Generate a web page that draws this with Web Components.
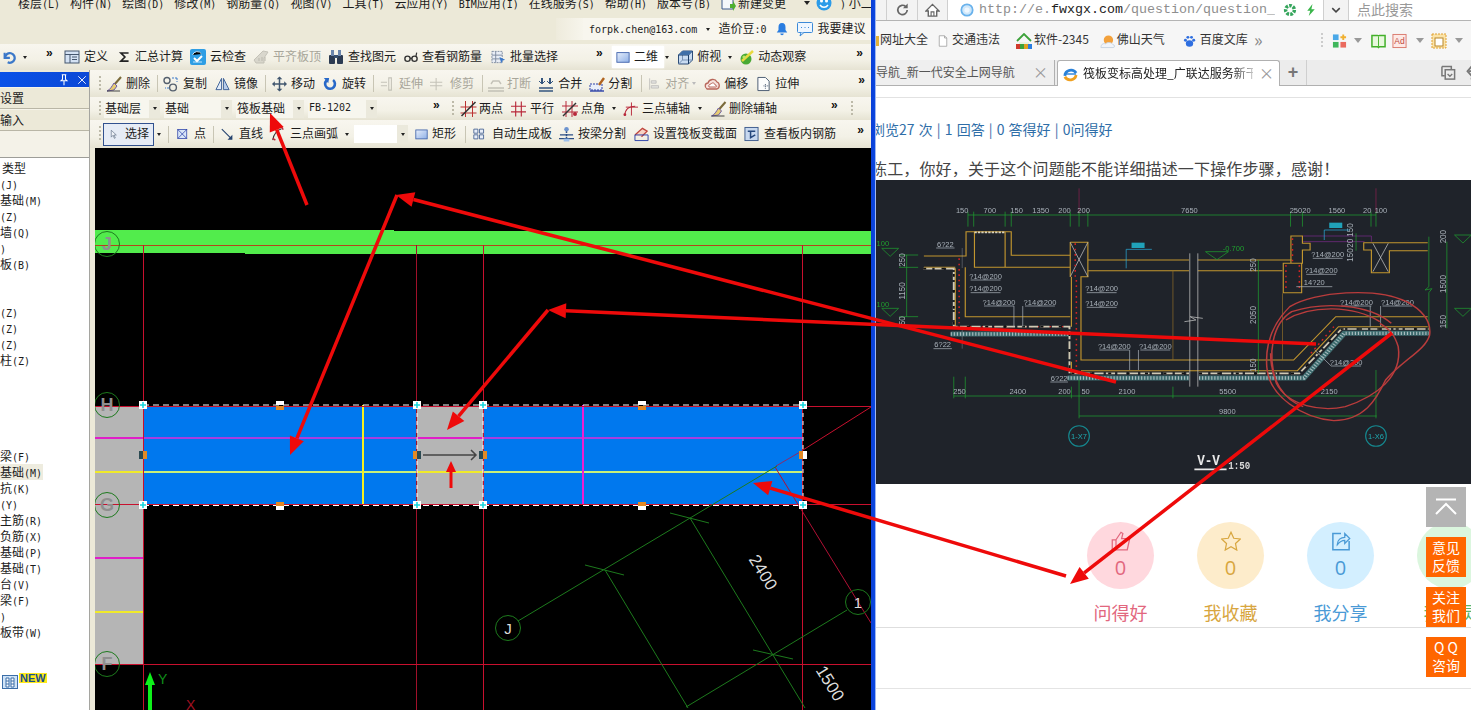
<!DOCTYPE html>
<html lang="zh">
<head>
<meta charset="utf-8">
<title>GCL</title>
<style>
html, body { margin: 0; height: 100%; overflow: hidden; background: #fff; }
body { font-family: "Noto Sans CJK SC", "Liberation Sans", sans-serif; }
</style>
</head>
<body>
<app-root>
  <cad-window slot="left">
    <cad-menubar></cad-menubar>
    <cad-userbar></cad-userbar>
    <tool-bar style="height:26px">
      <tool-btn icon="undo" w="14" g="0" style="margin-left:2px"></tool-btn><tb-caret style="margin-left:7px"></tb-caret><tb-more style="margin-left:19px"></tb-more>
      <tool-btn icon="define" style="margin-left:10px">定义</tool-btn>
      <tool-btn icon="sum" w="13" style="margin-left:10px">汇总计算</tool-btn>
      <tool-btn icon="cloud" style="margin-left:7px">云检查</tool-btn>
      <tool-btn icon="flat" off style="margin-left:7px">平齐板顶</tool-btn>
      <tool-btn icon="binoc" style="margin-left:7px">查找图元</tool-btn>
      <tool-btn icon="glasses" w="14" style="margin-left:8px">查看钢筋量</tool-btn>
      <tool-btn icon="batch" w="15" style="margin-left:9px">批量选择</tool-btn>
      <tb-more style="margin-left:38px"></tb-more>
      <tool-btn icon="plane" w="14" flat style="margin-left:8px">二维</tool-btn><tb-caret style="margin-left:1px"></tb-caret>
      <tool-btn icon="cube" w="17" g="3" style="margin-left:8px">俯视</tool-btn><tb-caret style="margin-left:7px"></tb-caret>
      <tool-btn icon="orbit" g="3" style="margin-left:7px">动态观察</tool-btn>
      <tb-more style="margin-left:50px"></tb-more>
    </tool-bar>
    <cad-body>
      <side-panel slot="side">
        <side-row label="类型" lead></side-row>
        <side-row label="(J)"></side-row>
        <side-row label="基础(M)"></side-row>
        <side-row label="(Z)"></side-row>
        <side-row label="墙(Q)"></side-row>
        <side-row label=")"></side-row>
        <side-row label="板(B)"></side-row>
        <side-row></side-row>
        <side-row></side-row>
        <side-row label="(Z)"></side-row>
        <side-row label="(Z)"></side-row>
        <side-row label="(Z)"></side-row>
        <side-row label="柱(Z)"></side-row>
        <side-row></side-row>
        <side-row></side-row>
        <side-row></side-row>
        <side-row></side-row>
        <side-row></side-row>
        <side-row label="梁(F)"></side-row>
        <side-row label="基础(M)" active></side-row>
        <side-row label="抗(K)"></side-row>
        <side-row label="(Y)"></side-row>
        <side-row label="主筋(R)"></side-row>
        <side-row label="负筋(X)"></side-row>
        <side-row label="基础(P)"></side-row>
        <side-row label="基础(T)"></side-row>
        <side-row label="台(V)"></side-row>
        <side-row label="梁(F)"></side-row>
        <side-row label=")"></side-row>
        <side-row label="板带(W)"></side-row>
      </side-panel>
      <tool-bar style="height:27px">
        <tb-grip style="margin-left:9px"></tb-grip>
        <tool-btn icon="brush" style="margin-left:4px">删除</tool-btn>
        <tb-sep style="margin-left:7px"></tb-sep>
        <tool-btn icon="copy" style="margin-left:5px">复制</tool-btn>
        <tool-btn icon="mirror" w="15" style="margin-left:8px">镜像</tool-btn>
        <tb-sep style="margin-left:7px"></tb-sep>
        <tool-btn icon="move" w="15" style="margin-left:6px">移动</tool-btn>
        <tool-btn icon="rotate" w="14" g="5" style="margin-left:8px">旋转</tool-btn>
        <tb-sep style="margin-left:7px"></tb-sep>
        <tool-btn icon="extend" w="14" g="5" off style="margin-left:6px">延伸</tool-btn>
        <tool-btn icon="trim" w="14" g="6" off style="margin-left:7px">修剪</tool-btn>
        <tb-sep style="margin-left:8px"></tb-sep>
        <tool-btn icon="breakline" g="3" off style="margin-left:5px">打断</tool-btn>
        <tool-btn icon="merge" style="margin-left:7px">合并</tool-btn>
        <tool-btn icon="split" g="3" style="margin-left:7px">分割</tool-btn>
        <tb-sep style="margin-left:9px"></tb-sep>
        <tool-btn icon="align" w="13" off style="margin-left:6px">对齐</tool-btn><tb-caret off style="margin-left:3px"></tb-caret>
        <tool-btn icon="offset" style="margin-left:8px">偏移</tool-btn>
        <tool-btn icon="stretch" w="15" style="margin-left:8px">拉伸</tool-btn>
        <tb-more style="margin-left:59px"></tb-more>
      </tool-bar>
      <tool-bar style="height:23px">
        <tb-grip style="margin-left:9px"></tb-grip>
        <tb-select w="56" style="margin-left:2px">基础层</tb-select>
        <tb-select w="68" style="margin-left:4px">基础</tb-select>
        <tb-select w="68" style="margin-left:4px">筏板基础</tb-select>
        <tb-select w="69" mono style="margin-left:4px">FB-1202</tb-select>
        <tb-more style="margin-left:56px"></tb-more>
        <tb-grip style="margin-left:11px"></tb-grip>
        <tool-btn icon="twopt" w="17" g="2" style="margin-left:5px">两点</tool-btn>
        <tool-btn icon="para" w="15" style="margin-left:8px">平行</tool-btn>
        <tool-btn icon="angle" g="3" style="margin-left:8px">点角</tool-btn><tb-caret style="margin-left:7px"></tb-caret>
        <tool-btn icon="three" w="15" style="margin-left:7px">三点辅轴</tool-btn><tb-caret style="margin-left:8px"></tb-caret>
        <tool-btn icon="brush" w="17" g="2" style="margin-left:8px">删除辅轴</tool-btn>
        <tb-more style="margin-left:54px"></tb-more>
        <tb-grip style="margin-left:12px"></tb-grip>
      </tool-bar>
      <tool-bar style="height:28px">
        <tb-grip style="margin-left:9px"></tb-grip>
        <tool-btn icon="cursor" w="10" g="5" pressed style="margin-left:1px">选择</tool-btn><tb-caret style="margin-left:3px"></tb-caret>
        <tb-sep style="margin-left:7px"></tb-sep>
        <tool-btn icon="point" w="12" g="5" style="margin-left:8px">点</tool-btn>
        <tb-sep style="margin-left:7px"></tb-sep>
        <tool-btn icon="line" w="13" g="5" style="margin-left:7px">直线</tool-btn>
        <tool-btn icon="arc" w="14" g="5" style="margin-left:8px">三点画弧</tool-btn><tb-caret style="margin-left:7px"></tb-caret>
        <tb-select w="54" white style="margin-left:5px"></tb-select>
        <tool-btn icon="plane" w="13" style="margin-left:7px">矩形</tool-btn>
        <tb-sep style="margin-left:9px"></tb-sep>
        <tool-btn icon="auto" w="13" g="6" style="margin-left:7px">自动生成板</tool-btn>
        <tool-btn icon="beam" w="15" style="margin-left:7px">按梁分割</tool-btn>
        <tool-btn icon="section" w="15" style="margin-left:8px">设置筏板变截面</tool-btn>
        <tool-btn icon="rebar" w="15" g="5" style="margin-left:7px">查看板内钢筋</tool-btn>
        <tb-more style="margin-left:21px"></tb-more>
      </tool-bar>
      <cad-canvas></cad-canvas>
    </cad-body>
  </cad-window>
  <browser-window slot="right">
    <browser-nav></browser-nav>
    <fav-bar></fav-bar>
    <tab-strip></tab-strip>
    <qa-page>
      <cad-photo slot="photo"></cad-photo>
      <qa-stat slot="stats" color="#e2677e" bg="#ffd8de" icon="thumb" label="问得好"></qa-stat>
      <qa-stat slot="stats" color="#d8a63f" bg="#fdeccb" icon="star" label="我收藏"></qa-stat>
      <qa-stat slot="stats" color="#4a9ad6" bg="#d3efff" icon="share" label="我分享"></qa-stat>
      <qa-stat slot="stats" color="#58b56e" bg="#dbf6de" icon="" label="我要灵"></qa-stat>
    </qa-page>
  </browser-window>
  <float-stack slot="over">
    <float-btn gray></float-btn>
    <float-btn>意见<br>反馈</float-btn>
    <float-btn>关注<br>我们</float-btn>
    <float-btn>Q Q<br>咨询</float-btn>
  </float-stack>
  <arrow-layer slot="over"></arrow-layer>
</app-root>

<script>
"use strict";

const CJK = '"Noto Sans CJK SC", "Liberation Sans", sans-serif';

const ICONS = {
  undo: '<path d="M3 3v6h6" fill="none" stroke="#3b78c9" stroke-width="2.4"/><path d="M3.5 8.5a5.5 5.5 0 1 1 3 5.5" fill="none" stroke="#3b78c9" stroke-width="2.6"/>',
  define: '<rect x="1" y="2" width="14" height="12" fill="#d4e2f4" stroke="#44566e"/><path d="M1 5.5h14M6 5.5v8.5M8 8h5M8 10.5h5" stroke="#44566e"/>',
  sum: '<path d="M13 3H3.5L8.5 8l-5 5H13" fill="none" stroke="#222" stroke-width="2"/>',
  cloud: '<rect x="0" y="0" width="16" height="16" rx="2" fill="#2f9ee4"/><path d="M2.5 6a5 5 0 0 1 9-1M3 13h9" stroke="#bfe3fb"/><path d="M4 9l3 3 5-5" fill="none" stroke="#fff" stroke-width="2"/>',
  flat: '<path d="M1 11l9-9 5 1-4 6v5H3z" fill="#d0cec4" stroke="#b4b2a8"/><path d="M6 12v-3M9 12V8M12 12V8" stroke="#a8a69c"/>',
  binoc: '<rect x="1" y="6" width="6" height="9" rx="1" fill="#2c3b52"/><rect x="9" y="6" width="6" height="9" rx="1" fill="#2c3b52"/><rect x="3" y="1" width="3" height="6" fill="#6b86ad"/><rect x="10" y="1" width="3" height="6" fill="#6b86ad"/><rect x="6" y="6" width="4" height="3" fill="#38506f"/>',
  glasses: '<circle cx="4" cy="10" r="3" fill="none" stroke="#333" stroke-width="1.6"/><circle cx="12" cy="10" r="3" fill="none" stroke="#333" stroke-width="1.6"/><path d="M7 9.5h2M13.5 8l1-5" stroke="#333" stroke-width="1.4"/>',
  batch: '<path d="M1 2h11v12H1z" fill="#e8edf5" stroke="#7d8ba0" stroke-dasharray="2 1"/><path d="M1 6h11M1 10h11M5 2v12" stroke="#7d8ba0"/><path d="M9 8l6 3-3 1-1 3z" fill="#3b78c9"/>',
  plane: '<defs><linearGradient id="pg" x1="0" y1="0" x2="1" y2="1"><stop offset="0" stop-color="#e6eefb"/><stop offset="1" stop-color="#8fb0e6"/></linearGradient></defs><rect x="1" y="3" width="14" height="11" fill="url(#pg)" stroke="#3a5ea8"/>',
  cube: '<path d="M1 6l4-4h10v9l-4 4H1z" fill="#c9dcf2" stroke="#2d4d78"/><path d="M5 2v9h10M5 11l-4 4" stroke="#7a93b5" fill="none"/><path d="M1 6h10v9M11 6l4-4" stroke="#1c3d66" fill="none"/><path d="M1 6l4-4h10l-4 4z" fill="#3f6fa8"/>',
  orbit: '<circle cx="7" cy="10" r="5.5" fill="#49a934"/><path d="M3 12L14 2" stroke="#e9d93f" stroke-width="2.4"/><circle cx="5" cy="8" r="1.6" fill="#b9e86a"/>',
  brush: '<path d="M15 1L8 9" stroke="#7a6a3a" stroke-width="2"/><path d="M8 7l3 3-3 4-7 1c3-1 5-5 7-8z" fill="#e8cd72" stroke="#6a5aa8"/><path d="M1 15h13" stroke="#444"/>',
  copy: '<circle cx="4" cy="4.5" r="3" fill="none" stroke="#55606e" stroke-width="1.4"/><circle cx="10" cy="11.5" r="3.4" fill="none" stroke="#55606e" stroke-width="1.4"/><path d="M9 2l5 0M14 2v4M6 12H2" stroke="#3b78c9" stroke-dasharray="2 1"/>',
  mirror: '<path d="M7 2L1 14h6z" fill="#e2ecf8" stroke="#3b5f95"/><path d="M9 2l6 12H9z" fill="#b8cdea" stroke="#3b5f95"/>',
  move: '<path d="M8 1v14M1 8h14" stroke="#42576f" stroke-width="1.6"/><path d="M8 0l3 3H5zM8 16l3-3H5zM0 8l3-3v6zM16 8l-3-3v6z" fill="#42576f"/>',
  rotate: '<path d="M11.5 3.5A5.6 5.6 0 1 1 4 4" fill="none" stroke="#2768c8" stroke-width="3"/><path d="M1 1l6 0-1 6z" fill="#2768c8"/>',
  extend: '<path d="M1 6h7M1 10h7M10 1h3v14h-3z" fill="none" stroke="#b4b2a8" stroke-width="1.2"/>',
  trim: '<path d="M0 6h14M0 10h14M7 1v14" fill="none" stroke="#b4b2a8" stroke-width="1.2"/>',
  breakline: '<path d="M0 12h16M0 15h16M3 8l2-3h6l2 3" fill="none" stroke="#b4b2a8" stroke-width="1.4"/>',
  merge: '<path d="M1 12h14M1 15h14" stroke="#35567f" stroke-width="1.4"/><path d="M4 2v6M12 2v6" stroke="#35567f" stroke-width="2"/><path d="M1 5l3 3 3-3M9 5l3 3 3-3" fill="none" stroke="#35567f"/>',
  split: '<path d="M1 8h12v6H1z" fill="#e8eef9" stroke="#2a3fa8" stroke-dasharray="2 1"/><path d="M10 9l5-7" stroke="#b0631f" stroke-width="2.4"/><path d="M1 15h14" stroke="#2a3fa8" stroke-width="1.4"/>',
  align: '<path d="M2 1v14M4 4h6v3H4zM4 10h9v3H4z" fill="#ddd" stroke="#aaa"/>',
  offset: '<path d="M3 13c-3-2-2-6 1-6 1-4 7-5 9-1 3 1 3 6 0 7z" fill="#f6e1dc" stroke="#b8665a" stroke-width="1.3"/><path d="M5 11c-1-2 1-3 2-3 1-2 4-1 4 1 2 0 2 2 1 2z" fill="#fff" stroke="#b8665a"/>',
  stretch: '<path d="M2 1h8l4 4v10H2z" fill="#fdfdfd" stroke="#44566e"/><path d="M10 8v5M8 10h5" stroke="#44566e" stroke-dasharray="1 1"/>',
  twopt: '<path d="M5 0v16M12 0v16M0 6h16M0 12h16" stroke="#b33" /><path d="M1 15L15 1" stroke="#333" stroke-width="1.6"/>',
  para: '<path d="M0 5h16M0 11h16M5 0v16M11 0v16" stroke="#b8283a" stroke-width="1.2"/>',
  angle: '<path d="M4 0v16M10 0v16M0 5h16M0 11h16" stroke="#b8283a"/><path d="M1 15L14 2" stroke="#333" stroke-width="1.4"/><circle cx="13" cy="13" r="2" fill="#b8283a"/>',
  three: '<path d="M2 15c0-6 4-10 11-10" fill="none" stroke="#b8283a" stroke-width="1.2"/><path d="M9 1v14M3 6h13" stroke="#b8283a"/><circle cx="2" cy="14" r="1.5" fill="#b8283a"/>',
  cursor: '<path d="M2 2v11l3-3 2 5 1.5-.6-2-4.8h3.6z" fill="#eef2f7" stroke="#5a6a80"/>',
  point: '<rect x="1" y="2" width="12" height="12" fill="#d9e6f8" stroke="#2a3fa8"/><path d="M1 2l12 12M13 2L1 14" stroke="#2a3fa8"/>',
  line: '<path d="M1 2l12 12" stroke="#24426e" stroke-width="1.4"/><path d="M14 15H8l6-6z" fill="#24426e"/>',
  arc: '<path d="M2 15C3 8 6 4 12 2" fill="none" stroke="#333" stroke-width="1.2"/><path d="M2 13l3 2M12 0l2 3" stroke="#b8283a" stroke-width="1.6"/>',
  auto: '<path d="M1 2h5v5H1zM8 2h5v5H8zM1 9h5v5H1zM8 9h5v5H8z" fill="#e8eef9" stroke="#3c5a8c"/>',
  beam: '<circle cx="8" cy="3" r="2.4" fill="#6d94cf"/><path d="M8 5v10" stroke="#2d4f86" stroke-dasharray="2 1" stroke-width="1.6"/><path d="M1 9h14M0 13h16" stroke="#2d4f86" stroke-width="1.4"/><rect x="5" y="13" width="6" height="3" fill="#9ec0ec"/>',
  section: '<path d="M1 9l8-7 5 3-6 6" fill="#f7d2c4" stroke="#c0453c" stroke-width="1.4"/><path d="M1 9h14v6H1z" fill="none" stroke="#2a3fa8"/>',
  rebar: '<rect x="1" y="1" width="14" height="14" fill="#c7d8ef" stroke="#3c5a8c"/><path d="M4 5h8M7 5v7l5-3" fill="none" stroke="#27497e" stroke-width="1.6"/>',
  doc: '<path d="M2 0h8l3 3v11H2z" fill="#f4f7fb" stroke="#3c5a8c"/><path d="M10 9h3v-3l3 5-3 5v-3h-3z" fill="#4caf31"/>',
  face: '<circle cx="8" cy="8" r="7.5" fill="#2b9be8"/><circle cx="5.5" cy="6" r="1.5" fill="#fff"/><circle cx="10.5" cy="6" r="1.5" fill="#fff"/><path d="M4 10c2 3 6 3 8 0" fill="none" stroke="#fff" stroke-width="1.4"/>',
  bell: '<path d="M8 1c3 0 4 2 4 5v3l2 3H2l2-3V6c0-3 1-5 4-5z" fill="#2a7de0"/><path d="M6 13a2 2 0 0 0 4 0z" fill="#2a7de0"/>',
  comment: '<rect x="0.5" y="1.5" width="15" height="10" rx="1" fill="#eef6ff" stroke="#3c8ad8"/><path d="M4 11.5l-1 3.5 4-3.5" fill="#eef6ff" stroke="#3c8ad8"/><path d="M4 6.5h1M7.5 6.5h1M11 6.5h1" stroke="#3c8ad8"/>',
  refresh: '<path d="M13 8a5 5 0 1 1-1.6-3.7" fill="none" stroke="#666" stroke-width="1.8"/><path d="M13.5 1v5h-5z" fill="#666"/>',
  home: '<path d="M8 2L1 9h2.5v5.5h9V9H15z" fill="#fff" stroke="#666" stroke-width="1.5"/><path d="M6.5 14.5V10h3v4.5" fill="none" stroke="#666" stroke-width="1.2"/>',
  globe: '<circle cx="8" cy="8" r="6.5" fill="#cfe7fa" stroke="#69b2ec" stroke-width="2"/><circle cx="8" cy="8" r="3" fill="#eef7ff"/>',
  ring: '<circle cx="8" cy="8" r="5" fill="none" stroke="#35a55c" stroke-width="4" stroke-dasharray="3 1.4"/>',
  bolt: '<path d="M10 0L3 9h4l-2 7 8-9H8.5z" fill="#39b54a"/>',
  chev: '<path d="M3 5.5l5 5 5-5" fill="none" stroke="#444" stroke-width="2"/>',
  page: '<path d="M3 1h7l3 3v11H3z" fill="#fff" stroke="#999"/><path d="M10 1v3h3" fill="none" stroke="#999"/>',
  h2345: '<path d="M1 8l7-7 7 7" fill="none" stroke="#3da23a" stroke-width="1.8"/><path d="M3 9h10v2H3z" fill="#e9f3df"/><path d="M0 11h4v5H0z" fill="#d03a2c"/><path d="M4 11h4v5H4z" fill="#3da23a"/><path d="M8 11h4v5H8z" fill="#e0a020"/><path d="M12 11h4v5h-4z" fill="#2a7de0"/>',
  weather: '<circle cx="9" cy="7" r="5" fill="#f3a13b"/><path d="M1 15c0-3 2-5 5-4 2-2 6-2 8 1 2 0 2 3 0 3z" fill="#f0f4fa" stroke="#c6d3e0"/>',
  paw: '<ellipse cx="8" cy="11" rx="4.5" ry="4" fill="#2f6fe0"/><circle cx="3" cy="7" r="1.8" fill="#2f6fe0"/><circle cx="6" cy="3.5" r="1.8" fill="#2f6fe0"/><circle cx="10.5" cy="3.5" r="1.8" fill="#2f6fe0"/><circle cx="13.2" cy="7" r="1.8" fill="#2f6fe0"/>',
  apps: '<rect x="1" y="1" width="6" height="6" fill="#4aa8e8"/><rect x="1" y="9" width="6" height="6" fill="#3fb65c"/><rect x="9" y="9" width="6" height="6" fill="#ea6a5e"/><path d="M12 1v6M9 4h6" stroke="#f0b030" stroke-width="2"/>',
  book: '<path d="M1 2h6c1 0 1 1 1 1s0-1 1-1h6v12H9l-1 1-1-1H1z" fill="#e8f8de" stroke="#43b02a" stroke-width="1.6"/><path d="M8 3v11" stroke="#43b02a"/>',
  ad: '<rect x="1" y="1" width="14" height="14" fill="#fde9e6" stroke="#d9776b"/><text x="8" y="11.5" text-anchor="middle" font-size="9" fill="#c0483b" font-family="Liberation Sans">Ad</text>',
  cal: '<rect x="1" y="1" width="14" height="14" fill="#fbe3a8" stroke="#e0a030" stroke-dasharray="2 1"/><rect x="4" y="5" width="8" height="8" fill="#fff" stroke="#b8862a"/>',
  ie: '<path d="M2 10a6.5 6.5 0 0 1 12-3" fill="none" stroke="#2b82d9" stroke-width="3"/><path d="M14 9a6.5 6.5 0 0 1-12 2" fill="none" stroke="#f0a020" stroke-width="3"/><path d="M1 8h13" stroke="#2b82d9" stroke-width="1.5"/>',
  restore: '<path d="M1 1h10v3M1 1v10h3" fill="none" stroke="#777" stroke-width="1.6"/><rect x="4.5" y="4.5" width="10" height="10" fill="none" stroke="#777" stroke-width="1.6"/><path d="M7 9l2.5 2.5L12 9" fill="none" stroke="#777" stroke-width="1.4"/>',
  undo2: '<path d="M3 6h8a3.5 3.5 0 0 1 0 8H5" fill="none" stroke="#777" stroke-width="1.8"/><path d="M6 1L1.5 6 6 11" fill="none" stroke="#777" stroke-width="1.8"/>',
  news: '<rect x="0.5" y="1.5" width="15" height="13" fill="#cfe3f7" stroke="#3c6ea8"/><path d="M4 4h3v9H4zM9 4h3v9H9zM4 7h3M9 7h3M4 10h3M9 10h3" fill="#fff" stroke="#3c6ea8"/>',
  pin: '<path d="M5 1h6M6 1v6L4 9h8l-2-2V1M8 9v6" fill="none" stroke="#fff" stroke-width="1.4"/>',
  close: '<path d="M3 3l10 10M13 3L3 13" stroke="#fff" stroke-width="1.2"/>',
  thumb: '<path d="M1 7h3v8H1zM4 7l4-6 1.5 1L8.5 6H15l-2 9H4z" fill="none" stroke="currentColor" stroke-width="1"/>',
  star: '<path d="M8 1l2.2 4.8 5.3.6-3.9 3.6 1 5.2L8 12.6l-4.6 2.6 1-5.2L.5 6.4l5.3-.6z" fill="none" stroke="currentColor" stroke-width="1"/>',
  share: '<path d="M8 2H1.5v13h13V8" fill="none" stroke="currentColor" stroke-width="1.2"/><path d="M5 11c0-4 3-6 6-6V2l4 4-4 4V7.500c-2 0-4 1-6 3.500z" fill="none" stroke="currentColor"/>'
};

const icon = (name, w = 16, h = 16) =>
  `<svg xmlns="http://www.w3.org/2000/svg" width="${w}" height="${h}" viewBox="0 0 16 16" style="display:block;flex:none">${ICONS[name] || ''}</svg>`;

// SimSun half width letters are 6px wide at 12px, so ascii runs get a 10px mono face
const lat = (s) => s.replace(/[\x21-\x7e]+/g, (m) => `<span style="font:10px 'DejaVu Sans Mono',monospace">${m}</span>`);

const MORE_CSS = 'font:bold 12px/12px "Liberation Sans",sans-serif';

class AppRoot extends HTMLElement {
  constructor() {
    super();
    this.attachShadow({mode: 'open'}).innerHTML = `<style>
      :host { display: flex; position: relative; width: 1471px; height: 710px; overflow: hidden; background: #fff; }
      .l { width: 871px; flex: none; overflow: hidden; }
      .div { width: 5px; flex: none; background: linear-gradient(90deg,#0b3fd4,#0a46e0 70%,#e8eef8); }
      .r { flex: 1; min-width: 0; overflow: hidden; }
    </style><div class="l"><slot name="left"></slot></div><div class="div"></div><div class="r"><slot name="right"></slot></div><slot name="over"></slot>`;
  }
}

class CadWindow extends HTMLElement {
  constructor() {
    super();
    this.attachShadow({mode: 'open'}).innerHTML = `<style>
      :host { display: flex; flex-direction: column; height: 710px; background: #ece9d8; color: #1c1c1c;
        font: 12px/14px ${CJK}; }
    </style><slot></slot>`;
  }
}

class CadBody extends HTMLElement {
  constructor() {
    super();
    this.attachShadow({mode: 'open'}).innerHTML = `<style>
      :host { display: flex; flex: 1; min-height: 0; }
      .main { flex: 1; min-width: 0; display: flex; flex-direction: column; }
    </style><slot name="side"></slot><div class="main"><slot></slot></div>`;
  }
}

const MENUS = ['楼层(L)', '构件(N)', '绘图(D)', '修改(M)', '钢筋量(Q)', '视图(V)', '工具(T)', '云应用(Y)',
  'BIM应用(I)', '在线服务(S)', '帮助(H)', '版本号(B)'];

class CadMenubar extends HTMLElement {
  connectedCallback() {
    const items = MENUS.map((m) => `<span>${lat(m)}</span>`).join('');
    this.attachShadow({mode: 'open'}).innerHTML = `<style>
      :host { display: block; height: 14px; overflow: hidden; }
      .row { display: flex; align-items: center; gap: 10px; height: 14px; margin-top: -4px; padding-left: 18px; white-space: nowrap; line-height: 12px; }
      .new { display: flex; align-items: center; gap: 2px; margin-left: -1px; }
      .caret { width: 0; height: 0; flex: none; margin: 0 -4px 0 -2px; border: 3px solid transparent; border-top: 4px solid #222; border-bottom: 0; }
    </style><div class="row">${items}
      <span class="new">${icon('doc')}新建变更</span>
      <span class="caret" style="margin-left:8px"></span>
      ${icon('face')}
      <span style="margin-left:-2px">${lat(')')} 小二</span>
    </div>`;
  }
}

class CadUserbar extends HTMLElement {
  connectedCallback() {
    this.attachShadow({mode: 'open'}).innerHTML = `<style>
      :host { display: block; height: 30px; padding-top: 4px; box-sizing: border-box; }
      .row { display: flex; align-items: center; height: 22px; margin-left: 556px; background: #f5f3e9; white-space: nowrap; }
      .lead { width: 27px; background: linear-gradient(90deg,#eeebdc,#f7f5ec); height: 22px; }
      .body { display: flex; align-items: center; flex: 1; height: 22px; background: #f8f6ee; padding-left: 6px; }
      .mail { font: 10px "DejaVu Sans Mono", monospace; }
      .t { margin-top: -2px; }
    </style><div class="row"><div class="lead"></div><div class="body">
      <span class="mail">forpk.chen@163.com</span>
      <span style="width:0;height:0;margin-left:9px;border:2.5px solid transparent;border-top:3px solid #222;border-bottom:0"></span>
      <span class="t" style="margin-left:8px">造价豆${lat(':0')}</span>
      <span style="margin-left:9px">${icon('bell', 14, 16)}</span>
      <span style="margin-left:8px">${icon('comment')}</span>
      <span class="t" style="margin-left:4px">我要建议</span>
    </div></div>`;
  }
}

class ToolBar extends HTMLElement {
  constructor() {
    super();
    this.attachShadow({mode: 'open'}).innerHTML = `<style>
      :host { display: flex; align-items: center; flex: none; white-space: nowrap; overflow: hidden;
        background: linear-gradient(#f8f6ef, #f3f1e6 60%, #e6e3d3); }
    </style><slot></slot>`;
  }
}

class ToolBtn extends HTMLElement {
  connectedCallback() {
    const w = +(this.getAttribute('w') || 16);
    const g = +(this.getAttribute('g') || 4);
    const off = this.hasAttribute('off');
    const pressed = this.hasAttribute('pressed');
    const flat = this.hasAttribute('flat');
    this.attachShadow({mode: 'open'}).innerHTML = `<style>
      :host { display: inline-flex; align-items: center; flex: none; gap: ${g}px; color: ${off ? '#a8a69a' : '#1c1c1c'};
        ${pressed ? 'box-sizing:border-box;width:51px;height:23px;padding-left:6px;border:1px solid #31518f;background:#e6ecf6;' : ''}
        ${flat ? 'background:#fff;padding:3px 6px 3px 4px;box-shadow:0 0 2px #fff;' : ''} }
      svg { opacity: ${off ? 0.75 : 1}; }
      .t { margin-top: -2px; }
    </style>${icon(this.getAttribute('icon'), w, 16)}<span class="t"><slot></slot></span>`;
  }
}

class TbCaret extends HTMLElement {
  connectedCallback() {
    const c = this.hasAttribute('off') ? '#bbb' : '#222';
    this.attachShadow({mode: 'open'}).innerHTML = `<style>
      :host { display: block; flex: none; width: 0; height: 0; border: 2.5px solid transparent; border-top: 3px solid ${c}; border-bottom: 0; }
    </style>`;
  }
}

class TbMore extends HTMLElement {
  constructor() {
    super();
    this.attachShadow({mode: 'open'}).innerHTML = `<style>
      :host { display: block; flex: none; width: 8px; ${MORE_CSS}; margin-bottom: 8px; color: #111; }
    </style>»`;
  }
}

class TbSep extends HTMLElement {
  constructor() {
    super();
    this.attachShadow({mode: 'open'}).innerHTML = `<style>
      :host { display: block; flex: none; width: 1px; height: 17px; background: #c8c5b4; }
    </style>`;
  }
}

class TbGrip extends HTMLElement {
  constructor() {
    super();
    this.attachShadow({mode: 'open'}).innerHTML = `<style>
      :host { display: block; flex: none; width: 2px; height: 16px; background: repeating-linear-gradient(#bdbaa9 0 2px, transparent 2px 4px); margin-right: 1px; }
    </style>`;
  }
}

class TbSelect extends HTMLElement {
  connectedCallback() {
    const w = this.getAttribute('w');
    const face = this.hasAttribute('mono') ? `font:10px "DejaVu Sans Mono",monospace;` : '';
    const bg = this.hasAttribute('white') ? '#fff' : '#f7f6ee';
    this.attachShadow({mode: 'open'}).innerHTML = `<style>
      :host { display: flex; align-items: center; flex: none; width: ${w}px; height: 18px; background: ${bg}; box-sizing: border-box; padding-left: 1px; ${face} }
      .t { flex: 1; overflow: hidden; margin-top: -2px; }
      .b { width: 11px; height: 18px; background: #ebe9dc; display: flex; align-items: center; justify-content: center; }
      .c { width: 0; height: 0; border: 2.5px solid transparent; border-top: 3px solid #222; border-bottom: 0; }
    </style><span class="t"><slot></slot></span><span class="b"><span class="c"></span></span>`;
  }
}

class SidePanel extends HTMLElement {
  connectedCallback() {
    this.attachShadow({mode: 'open'}).innerHTML = `<style>
      :host { display: flex; flex-direction: column; flex: none; width: 90px; box-sizing: border-box; height: 640px; border-right: 1px solid #a5a5a0; overflow: hidden; }
      .gap { height: 2px; }
      .head { display: flex; align-items: center; justify-content: flex-end; gap: 6px; height: 15px; background: linear-gradient(90deg,#0a52e8,#0b48d6); padding-right: 1px; }
      .tab { height: 22px; box-sizing: border-box; line-height: 19px; border-bottom: 1px solid #b9b6a6; border-top: 1px solid #f6f4ea; }
      .fill { height: 27px; background: #f4f2e8; border-bottom: 1px solid #9d9d98; box-sizing: border-box; }
      .list { flex: 1; background: #fff; padding-top: 2px; position: relative; }
      .new { display: flex; align-items: flex-start; gap: 1px; margin: 34px 0 0 2px; }
      .badge { font: bold 11px/10px "Liberation Sans",sans-serif; background: #ffe91a; color: #184d90; padding: 0 1px; margin-top: -1px; }
    </style>
    <div class="gap"></div>
    <div class="head">${icon('pin', 12, 14)}${icon('close', 12, 14)}</div>
    <div class="tab">设置</div>
    <div class="tab">输入</div>
    <div class="fill"></div>
    <div class="list"><slot></slot><div class="new">${icon('news')}<span class="badge">NEW</span></div></div>`;
  }
}

class SideRow extends HTMLElement {
  connectedCallback() {
    const label = this.getAttribute('label') || '';
    const bg = this.hasAttribute('active') ? 'background:#eeecdf;width:43px;' : '';
    const pad = this.hasAttribute('lead') ? 'padding-left:2px;' : '';
    this.attachShadow({mode: 'open'}).innerHTML = `<style>
      :host { display: block; height: 16px; line-height: 16px; white-space: nowrap; overflow: hidden; ${bg} ${pad} }
    </style>${lat(label)}`;
  }
}

const L = (x1, y1, x2, y2, c, w = 1, extra = '') =>
  `<line x1="${x1}" y1="${y1}" x2="${x2}" y2="${y2}" stroke="${c}" stroke-width="${w}" ${extra}/>`;

class CadCanvas extends HTMLElement {
  connectedCallback() {
    const RED = '#c8102e';
    const GRN = '#1d7a1d';
    const corner = (x, y) => `<rect x="${x - 4}" y="${y - 4}" width="8" height="8" fill="#fff"/><path d="M${x - 3} ${y}h6M${x} ${y - 3}v6" stroke="#19d6dc" stroke-width="1.6"/>`;
    const mid = (x, y, up) => up
      ? `<rect x="${x - 4}" y="${y - 4}" width="8" height="4" fill="#fff"/><rect x="${x - 4}" y="${y + 1}" width="8" height="4" fill="#e28a25"/>`
      : `<rect x="${x - 4}" y="${y - 4}" width="8" height="4" fill="#e28a25"/><rect x="${x - 4}" y="${y}" width="8" height="4" fill="#fff"/>`;
    const side = (x, y, a, b) => `<rect x="${x - 4}" y="${y - 4}" width="4" height="8" fill="${a}"/><rect x="${x}" y="${y - 4}" width="4" height="8" fill="${b}"/>`;
    const circ = (x, y, t, col = '#8f8f8f', sz = 18, wt = 'bold') =>
      `<circle cx="${x}" cy="${y}" r="12.500" fill="none" stroke="${GRN}"/><text x="${x}" y="${y + 6}" text-anchor="middle" font-size="${sz}" fill="${col}" font-weight="${wt}" font-family="Liberation Sans">${t}</text>`;
    this.attachShadow({mode: 'open'}).innerHTML = `<style>
      :host { display: block; flex: 1; min-height: 0; margin-left: 5px; background: #000; overflow: hidden; }
      svg { display: block; }
    </style>
    <svg xmlns="http://www.w3.org/2000/svg" width="776" height="562" viewBox="95 148 776 562">
      <rect x="95" y="148" width="776" height="562" fill="#000"/>
      <path d="M95 230H394V231H871V254H245V253H95z" fill="#52ec4c"/>
      <rect x="95" y="406" width="48" height="258" fill="#b5b5b5"/>
      <rect x="417" y="406" width="67" height="99" fill="#b5b5b5"/>
      <rect x="143" y="406" width="274" height="99" fill="#0078ee"/>
      <rect x="484" y="406" width="319" height="99" fill="#0078ee"/>
      ${L(95, 438, 143, 438, '#e01fc8', 2)}${L(143, 438, 417, 438, '#a83ee0', 2)}${L(417, 438, 484, 438, '#e01fc8', 2)}${L(484, 438, 803, 438, '#a83ee0', 2)}
      ${L(95, 472, 143, 472, '#f0ea2a', 2)}${L(143, 472, 417, 472, '#c8f07a', 2)}${L(417, 472, 484, 472, '#f0ea2a', 2)}${L(484, 472, 803, 472, '#c8f07a', 2)}
      ${L(95, 558, 143, 558, '#e01fc8', 2)}${L(95, 612, 143, 612, '#f0ea2a', 2)}
      ${L(363, 405, 363, 505, '#f5f01e', 2)}${L(583, 405, 583, 505, '#f01fd0', 2)}
      ${L(95, 245.500, 871, 245.500, '#b4441a')}
      ${L(143.500, 245, 143.500, 710, RED)}${L(416.500, 245, 416.500, 710, '#a0102a')}${L(483.500, 245, 483.500, 710, '#c8102e')}${L(802.500, 245, 802.500, 710, RED)}
      ${L(95, 406.500, 871, 406.500, RED)}${L(95, 504.500, 871, 504.500, RED)}${L(95, 664.500, 871, 664.500, RED)}
      ${L(143, 405, 803, 405, '#fff', 1, 'stroke-dasharray="6 4"')}${L(143, 505.500, 803, 505.500, '#fff', 1, 'stroke-dasharray="6 4"')}
      ${L(417, 405, 417, 505, '#fff', 1, 'stroke-dasharray="4 4"')}${L(483, 405, 483, 505, '#fff', 1, 'stroke-dasharray="4 4"')}${L(803, 405, 803, 505, '#fff', 1, 'stroke-dasharray="4 4"')}
      ${L(803, 450, 871, 407, RED)}${L(776, 466, 800, 452, '#8c2a6a')}${L(775, 467, 871, 623, '#b01034')}
      ${L(518, 621, 777, 466, GRN)}${L(847, 610, 686, 707, GRN)}
      ${L(605, 570, 688, 708, GRN)}${L(690, 518, 805, 708, GRN)}
      ${L(585, 565, 624, 575, GRN)}${L(670, 513, 709, 523, GRN)}${L(753, 650, 793, 659, GRN)}
      ${circ(107, 244, 'J')}${circ(107, 405, 'H')}${circ(107, 505, 'G')}${circ(107, 664, 'F')}
      ${circ(508, 628, 'J', '#ddd', 15, 'normal')}${circ(858, 602, '1', '#ddd', 15, 'normal')}
      <text transform="translate(762 573) rotate(58)" text-anchor="middle" dominant-baseline="middle" font-size="17" fill="#ddd" font-family="Liberation Sans">2400</text>
      <text transform="translate(829 684) rotate(58)" text-anchor="middle" dominant-baseline="middle" font-size="17" fill="#ddd" font-family="Liberation Sans">1500</text>
      ${corner(143, 405)}${corner(417, 405)}${corner(483, 405)}${corner(803, 405)}
      ${corner(143, 505)}${corner(417, 505)}${corner(483, 505)}${corner(803, 505)}
      ${mid(280, 405, true)}${mid(642, 405, true)}${mid(280, 506, false)}${mid(642, 506, false)}
      ${side(143, 455, '#2c4a52', '#e28a25')}${side(417, 455, '#e28a25', '#2c4a52')}${side(483, 455, '#2c4a52', '#e28a25')}${side(803, 455, '#e28a25', '#fff')}
      <path d="M423 455H476M471 450l5 5-5 5" fill="none" stroke="#444" stroke-width="1.500"/>
      <path d="M150 710V684" stroke="#0ef01a" stroke-width="4"/><path d="M150 672l-5 13h10z" fill="#0ef01a"/>
      <text x="158" y="684" font-size="14" fill="#0f8f1a" font-family="Liberation Sans">Y</text>
      <text x="186" y="710" font-size="14" fill="#a01020" font-family="Liberation Sans">X</text>
    </svg>`;
  }
}

class ArrowLayer extends HTMLElement {
  connectedCallback() {
    const arrow = (x1, y1, x2, y2, len = 18, half = 7.5, w = 3.5) => {
      const a = Math.atan2(y2 - y1, x2 - x1);
      const bx = x2 - len * Math.cos(a);
      const by = y2 - len * Math.sin(a);
      const nx = -Math.sin(a) * half;
      const ny = Math.cos(a) * half;
      return L(x1, y1, bx, by, '#ee0a0a', w) +
        `<polygon points="${x2},${y2} ${bx + nx},${by + ny} ${bx - nx},${by - ny}" fill="#ee0a0a"/>`;
    };
    this.attachShadow({mode: 'open'}).innerHTML = `<style>
      :host { position: absolute; left: 0; top: 0; width: 1471px; height: 710px; pointer-events: none; }
    </style>
    <svg xmlns="http://www.w3.org/2000/svg" width="1471" height="710" viewBox="0 0 1471 710">
      ${arrow(307, 205, 270, 113)}
      ${arrow(1116, 382, 396, 195)}
      ${arrow(397, 195, 290, 455)}
      ${arrow(1316, 344, 548, 310)}
      ${arrow(548, 310, 447, 430)}
      ${arrow(1392, 333, 1070, 584)}
      ${arrow(1066, 576, 753, 483)}
      ${arrow(451, 488, 451, 461, 11, 5, 3)}
    </svg>`;
  }
}

class BrowserWindow extends HTMLElement {
  constructor() {
    super();
    this.attachShadow({mode: 'open'}).innerHTML = `<style>
      :host { display: flex; flex-direction: column; height: 710px; background: #fff; color: #333; font: 12px/14px ${CJK}; overflow: hidden; }
    </style><slot></slot>`;
  }
}

class BrowserNav extends HTMLElement {
  connectedCallback() {
    this.attachShadow({mode: 'open'}).innerHTML = `<style>
      :host { display: flex; flex: none; height: 21px; box-sizing: border-box; border-bottom: 1px solid #b4b4b4; background: #f3f3f3; overflow: hidden; }
      .b { display: flex; align-items: center; justify-content: center; border-right: 1px solid #cfcfcf; height: 20px; box-sizing: border-box; flex: none; }
      .addr { display: flex; align-items: center; flex: none; width: 376px; height: 20px; background: #fff; border-right: 1px solid #cfcfcf; box-sizing: border-box; padding-left: 12px; }
      .url { font: 13.33px/20px "Liberation Mono", monospace; color: #8e8e8e; margin-left: 5px; white-space: nowrap; width: 296px; overflow: hidden; }
      .url b { color: #222; font-weight: normal; }
      .q { font-size: 14px; line-height: 18px; color: #999; padding-left: 8px; background: #fff; flex: 1; white-space: nowrap; }
    </style>
    <span class="b" style="width:11px"></span>
    <span class="b" style="width:31px">${icon('refresh', 15, 16)}</span>
    <span class="b" style="width:30px">${icon('home', 15, 16)}</span>
    <div class="addr">${icon('globe', 14, 16)}<span class="url">http://e.<b>fwxgx.com</b>/question/question_</span>
      <span style="margin-left:8px">${icon('ring', 14, 14)}</span><span style="margin-left:8px">${icon('bolt', 12, 16)}</span></div>
    <span class="b" style="width:25px">${icon('chev', 12, 14)}</span>
    <span class="q">点此搜索</span>`;
  }
}

class FavBar extends HTMLElement {
  connectedCallback() {
    const item = (ic, t, m, w = 14, g = 2) =>
      `<span class="i" style="margin-left:${m}px;gap:${g}px">${icon(ic, w, 16)}<span class="t">${t}</span></span>`;
    const caret = (m) => `<span style="margin-left:${m}px;width:0;height:0;border:4px solid transparent;border-top:5px solid #999;border-bottom:0"></span>`;
    this.attachShadow({mode: 'open'}).innerHTML = `<style>
      :host { display: flex; align-items: center; flex: none; height: 39px; background: #f6f6f6; white-space: nowrap; overflow: hidden; }
      .i { display: inline-flex; align-items: center; flex: none; }
      .t { margin-top: -3px; }
      .y { width: 3px; height: 10px; background: #e2b23a; flex: none; }
    </style>
    <span class="y"></span><span class="t" style="margin-left:1px">网址大全</span>
    ${item('page', '交通违法', 9, 12, 3)}
    ${item('h2345', '软件-2345', 16, 16, 2)}
    ${item('weather', '佛山天气', 11, 15, 2)}
    ${item('paw', '百度文库', 18, 13, 4)}
    <span class="t" style="margin-left:6px;color:#888;font-size:18px">»</span>
    <span style="margin-left:58px;width:2px;height:16px;background:repeating-linear-gradient(#ccc 0 2px,transparent 2px 4px)"></span>
    <span style="margin-left:9px">${icon('apps', 15, 16)}</span>${caret(7)}
    <span style="margin-left:9px">${icon('book', 15, 16)}</span>
    <span style="margin-left:6px">${icon('ad', 15, 16)}</span>${caret(9)}
    <span style="margin-left:7px">${icon('cal', 16, 16)}</span>${caret(8)}`;
  }
}

class TabStrip extends HTMLElement {
  connectedCallback() {
    const x = '<span style="color:#999;font-size:15px;line-height:15px">×</span>';
    this.attachShadow({mode: 'open'}).innerHTML = `<style>
      :host { display: block; flex: none; height: 38px; box-sizing: border-box; border-bottom: 1px solid #e2e2e2; background: #fff; }
      .row { display: flex; align-items: flex-end; height: 26px; background: #ececec; border-bottom: 1px solid #b0b0b0; box-sizing: border-box; overflow: visible; white-space: nowrap; }
      .t { display: flex; align-items: center; box-sizing: border-box; height: 25px; flex: none; }
      .t span { margin-top: -2px; }
      .old { width: 179px; background: #efefef; border-right: 1px solid #b0b0b0; color: #555; justify-content: space-between; padding-right: 6px; }
      .cur { width: 223px; height: 26px; margin-left: 2px; margin-bottom: -1px; background: #fff; border: 1px solid #b0b0b0; border-bottom: 0; border-radius: 3px 3px 0 0; padding: 0 5px; color: #222; }
      .cur .n { width: 174px; overflow: hidden; margin-left: 5px; margin-right: 6px; -webkit-mask-image: linear-gradient(90deg,#000 88%,rgba(0,0,0,.25)); }
      .plus { width: 26px; height: 25px; flex: none; border-right: 1px solid #cfcfcf; color: #777; font: bold 18px/24px "Liberation Sans",sans-serif; text-align: center; }
    </style><div class="row">
      <div class="t old"><span>导航_新一代安全上网导航</span>${x}</div>
      <div class="t cur">${icon('ie', 15, 16)}<span class="n">筏板变标高处理_广联达服务新干</span>${x}</div>
      <div class="plus">+</div>
      <span style="margin:0 0 4px 134px">${icon('restore', 15, 16)}</span>
      <span style="margin:0 0 4px 10px">${icon('undo2', 15, 16)}</span>
    </div>`;
  }
}

class QaPage extends HTMLElement {
  constructor() {
    super();
    this.attachShadow({mode: 'open'}).innerHTML = `<style>
      :host { display: block; flex: 1; min-height: 0; background: #fff; overflow: hidden; }
      .meta { margin: 21px 0 0 -5px; font-size: 14px; line-height: 20px; color: #2f6ea8; white-space: nowrap; word-spacing: 1px; }
      .ask { margin: 19px 0 2px -5px; font-size: 16px; line-height: 20px; color: #444; white-space: nowrap; letter-spacing: .15px; }
      .stats { display: flex; gap: 43px; padding: 38px 0 0 211px; height: 105px; overflow: hidden; border-bottom: 1px solid #dedede; }
      .blank { height: 60px; border-bottom: 1px solid #e4e4e4; }
    </style>
    <div class="meta">浏览27 次 | 1 回答 | 0 答得好 | 0问得好</div>
    <div class="ask">陈工，你好，关于这个问题能不能详细描述一下操作步骤，感谢！</div>
    <slot name="photo"></slot>
    <div class="stats"><slot name="stats"></slot></div>
    <div class="blank"></div>`;
  }
}

class CadPhoto extends HTMLElement {
  connectedCallback() {
    const ORG = '#c2962f';
    const G = '#1fa02f';
    const T = '#a9b1b9';
    const txt = (x, y, s, sz = 24, c = T) => `<text transform="translate(${x} ${y}) scale(.82 1)" text-anchor="middle" font-size="${sz}" fill="${c}" font-family="Liberation Sans">${s}</text>`;
    const vt = (x, y, s, c = T) => `<text transform="translate(${x} ${y}) rotate(-90)" text-anchor="middle" font-size="24" fill="${c}" font-family="Liberation Sans">${s}</text>`;
    const bar = (x, y, w = 78, s = '?14@200') => txt(x + w / 2, y - 4, s) + L(x, y, x + w, y, T, 2);
    const tick = (x, y1 = 95, y2 = 140) => L(x, y1, x, y2, G, 2);
    const grav = (d) => `<path d="${d}" fill="none" stroke="#3c6a6d" stroke-width="15"/><path d="${d}" fill="none" stroke="#a9bcbf" stroke-width="10" stroke-dasharray="3 5"/>`;
    const slab = (d) => `<path d="${d}" fill="none" stroke="#d0c9b4" stroke-width="5" stroke-dasharray="24 6"/><path d="${d}" fill="none" stroke="#111" stroke-width="5" stroke-dasharray="8 40"/>`;
    const dots = (d) => `<path d="${d}" fill="none" stroke="#d42222" stroke-width="4" stroke-dasharray="5 11"/>`;
    const tri = (x, y, w = 44) => `<path d="M${x} ${y}h${w}l-${w / 2} 24z" fill="none" stroke="${G}" stroke-width="2"/>`;
    this.attachShadow({mode: 'open'}).innerHTML = `<style>
      :host { display: block; height: 304px; background: #1f232a; overflow: hidden; }
      svg { display: block; filter: blur(.35px); }
    </style>
    <svg xmlns="http://www.w3.org/2000/svg" width="595" height="304" viewBox="15 0 1553 912" preserveAspectRatio="none">
      <rect x="15" y="0" width="1553" height="912" fill="#1f232a"/>
      ${L(545, 25, 545, 100, '#8a2050', 2)}${L(1320, 25, 1320, 100, '#8a2050', 2)}
      ${L(255, 105, 1320, 105, G, 2)}${tick(255)}${tick(270)}${tick(352)}${tick(368)}${tick(522)}${tick(545)}${tick(568)}${tick(1097)}${tick(1128)}${tick(1307)}${tick(1320)}
      ${txt(240, 99, '150')}${txt(312, 99, '700')}${txt(382, 99, '150')}${txt(445, 99, '1350')}${txt(507, 99, '200')}${txt(557, 99, '200')}${txt(833, 99, '7650')}${txt(1122, 99, '25020')}${txt(1218, 99, '1560')}${txt(1297, 99, '20')}${txt(1333, 99, '100')}

      <path d="M140 228H250V155H368V226H522M140 262H222M272 155V262H522M352 155V262" fill="none" stroke="${ORG}" stroke-width="3"/>
      <path d="M248 262V410H522M222 265V440" fill="none" stroke="${ORG}" stroke-width="3"/>
      <path d="M272 157H352" stroke="#d9d2bd" stroke-width="5" stroke-dasharray="6 3"/>
      <path d="M522 187H568V290H550V540H1105L1215 410H1455M525 290V440" fill="none" stroke="${ORG}" stroke-width="3"/>
      <path d="M522 187V290M568 240H832M568 272H832M855 240H1100M855 272H1076M525 545V580" fill="none" stroke="${ORG}" stroke-width="3"/>
      <path d="M550 572H1115L1222 440H1455" fill="none" stroke="${ORG}" stroke-width="3"/>
      <path d="M790 272V540M1076 340V540" fill="none" stroke="#8d6c28" stroke-width="2"/>
      <path d="M522 187L568 290M568 187L522 290" stroke="#c9c9c9" stroke-width="2"/>
      <path d="M1098 168H1128V190H1148V210H1128V250H1098zM1078 250H1126V338H1078z" fill="none" stroke="${ORG}" stroke-width="3"/>
      <path d="M1130 168H1308V185M1130 185H1290" fill="none" stroke="#7a2a8a" stroke-width="2"/>
      <path d="M1455 188H1288V210H1308V278H1355V212H1455" fill="none" stroke="${ORG}" stroke-width="3"/>
      <path d="M1312 190L1352 275M1352 190L1312 275" stroke="#c9c9c9" stroke-width="2"/>
      ${dots('M232 235V430')}${dots('M535 190V290M538 300V570')}${dots('M1102 175V245M1085 255V335M1120 255V335')}${dots('M1150 520L1210 440M520 440H230')}
      ${grav('M210 462H520')}${grav('M515 594H832')}${grav('M858 594H1132L1237 460H1458')}
      ${slab('M138 266H218V440H520V580')}${slab('M525 580H832')}${slab('M858 580H1120L1230 447H1458')}
      <path d="M834 220V620M855 220V620" stroke="#c9c9c9" stroke-width="2"/>
      <path d="M820 425L850 420L835 410L868 415" fill="none" stroke="#c9c9c9" stroke-width="2"/>
      ${L(218, 648, 1325, 648, G, 2)}${tick(218, 590, 655)}${tick(248, 590, 655)}${tick(525, 620, 655)}${tick(790, 620, 655)}${tick(1320, 570, 715)}${tick(545, 600, 715)}
      ${L(545, 708, 1322, 708, G, 2)}
      ${txt(233, 642, '250')}${txt(385, 642, '2400')}${txt(507, 642, '200')}${txt(562, 642, '50')}${txt(670, 642, '2100')}${txt(933, 642, '5500')}${txt(1198, 642, '2150')}${txt(932, 701, '9800')}
      ${L(95, 225, 95, 410, G, 2)}${L(75, 225, 125, 225, G, 2)}${L(75, 262, 125, 262, G, 2)}${L(75, 410, 125, 410, G, 2)}
      ${vt(90, 240, '250')}${vt(90, 333, '1150')}${vt(90, 422, '50')}
      ${L(1013, 240, 1013, 580, G, 2)}${vt(1008, 255, '250')}${vt(1008, 405, '2050')}${vt(1008, 556, '150')}
      ${L(1268, 160, 1268, 212, G, 2)}${vt(1260, 150, '150')}${vt(1260, 190, '20')}${vt(1260, 225, '150')}
      ${L(1505, 185, 1505, 445, G, 2)}${vt(1502, 170, '200')}${vt(1502, 312, '1500')}${vt(1502, 425, '150')}
      <path d="M1458 170V320L1448 330L1466 326L1458 338V450" fill="none" stroke="${G}" stroke-width="2"/>
      ${tri(30, 205)}${tri(30, 385)}${tri(875, 215, 60)}${tri(1525, 165)}${tri(1525, 385)}
      ${txt(33, 198, '100', 24, G)}${txt(33, 382, '100', 24, G)}${txt(948, 212, '-0.700', 24, G)}
      <path d="M668 265V208H735M1185 180V150H1250" fill="none" stroke="#2aa9d8" stroke-width="2"/>
      <rect x="682" y="188" width="34" height="16" fill="#21c2dd" opacity=".8"/><rect x="1198" y="128" width="34" height="16" fill="#21c2dd" opacity=".8"/>
      ${bar(262, 300)}${bar(262, 338)}${bar(297, 378)}${bar(404, 378)}${bar(565, 338)}${bar(565, 382)}${bar(598, 510)}${bar(705, 510)}${bar(1155, 235)}${bar(1138, 283)}${bar(1112, 320, 94, '14?20')}${bar(1230, 378)}${bar(1337, 378)}${bar(1203, 558)}
      ${bar(172, 204, 48, '6?22')}${bar(165, 506, 48, '6?22')}${bar(470, 606, 46, '6?22')}
      ${L(375, 378, 375, 440, T, 2)}${L(398, 378, 398, 440, T, 2)}${L(677, 510, 677, 570, T, 2)}${L(700, 510, 700, 570, T, 2)}${L(1305, 378, 1305, 440, T, 2)}${L(1332, 378, 1332, 440, T, 2)}${L(1160, 510, 1203, 558, T, 2)}
      ${L(240, 204, 240, 264, T, 1)}${L(240, 440, 240, 506, T, 1)}
      <ellipse cx="545" cy="768" rx="27" ry="31" fill="none" stroke="#15888f" stroke-width="3"/><ellipse cx="1320" cy="768" rx="27" ry="31" fill="none" stroke="#15888f" stroke-width="3"/>
      ${txt(545, 778, '1-X7', 24, '#1fa9b0')}${txt(1320, 778, '1-X6', 24, '#1fa9b0')}
      <path d="M1095 380C1160 335 1320 320 1400 365C1440 390 1465 420 1460 465C1450 510 1390 540 1345 600C1320 660 1290 720 1210 722C1130 715 1040 650 1035 560C1030 480 1060 420 1095 380Z" fill="none" stroke="#b93c3c" stroke-width="4"/>
      <path d="M1360 430C1300 370 1180 365 1100 395C1050 430 1035 520 1060 610C1090 680 1180 695 1240 680C1320 650 1390 590 1378 500C1370 470 1360 450 1330 430" fill="none" stroke="#b93c3c" stroke-width="4"/>
      <path d="M1085 420C1150 375 1260 375 1330 425M1045 520C1045 600 1080 660 1130 680" fill="none" stroke="#b93c3c" stroke-width="4"/>
      <text transform="translate(883 855) scale(.72 1)" text-anchor="middle" font-size="46" font-weight="bold" fill="#e8e8e8" font-family="Liberation Mono">V-V</text>
      ${L(846, 868, 930, 868, '#e8e8e8', 5)}
      <text transform="translate(963 866) scale(.75 1)" text-anchor="middle" font-size="32" font-weight="bold" fill="#d8d8d8" font-family="Liberation Mono">1:50</text>
    </svg>`;
  }
}

class QaStat extends HTMLElement {
  connectedCallback() {
    const c = this.getAttribute('color');
    this.attachShadow({mode: 'open'}).innerHTML = `<style>
      :host { display: block; flex: none; width: 67px; color: ${c}; text-align: center; }
      .c { width: 67px; height: 67px; border-radius: 50%; background: ${this.getAttribute('bg')}; display: flex; flex-direction: column; align-items: center; padding-top: 9px; box-sizing: border-box; }
      .n { font: 400 20px/24px "Open Sans", sans-serif; margin-top: 5px; }
      .l { font-size: 18px; line-height: 24px; margin: 11px -20px 0; white-space: nowrap; }
    </style><div class="c">${icon(this.getAttribute('icon'), 20, 20)}<div class="n">0</div></div>
    <div class="l">${this.getAttribute('label')}</div>`;
  }
}

class FloatStack extends HTMLElement {
  constructor() {
    super();
    this.attachShadow({mode: 'open'}).innerHTML = `<style>
      :host { position: absolute; left: 1426px; top: 487px; display: flex; flex-direction: column; gap: 10px; }
    </style><slot></slot>`;
  }
}

class FloatBtn extends HTMLElement {
  connectedCallback() {
    const gray = this.hasAttribute('gray');
    const top = '<svg xmlns="http://www.w3.org/2000/svg" width="24" height="18" viewBox="0 0 24 18"><path d="M2 1.500h20M2 16L12 6l10 10" fill="none" stroke="#fff" stroke-width="2"/></svg>';
    this.attachShadow({mode: 'open'}).innerHTML = `<style>
      :host { display: flex; align-items: center; justify-content: center; width: 40px; height: 40px; box-sizing: border-box; padding-bottom: ${gray ? 0 : 2}px; background: ${gray ? '#b4b4b4' : '#ff6600'};
        color: #fff; font: 14px/18px ${CJK}; text-align: center; }
    </style>${gray ? top : '<div><slot></slot></div>'}`;
  }
}

[['app-root', AppRoot], ['cad-window', CadWindow], ['cad-body', CadBody], ['cad-menubar', CadMenubar],
  ['cad-userbar', CadUserbar], ['tool-bar', ToolBar], ['tool-btn', ToolBtn], ['tb-caret', TbCaret],
  ['tb-more', TbMore], ['tb-sep', TbSep], ['tb-grip', TbGrip], ['tb-select', TbSelect],
  ['side-panel', SidePanel], ['side-row', SideRow], ['cad-canvas', CadCanvas], ['arrow-layer', ArrowLayer],
  ['browser-window', BrowserWindow], ['browser-nav', BrowserNav], ['fav-bar', FavBar], ['tab-strip', TabStrip],
  ['qa-page', QaPage], ['cad-photo', CadPhoto], ['qa-stat', QaStat], ['float-stack', FloatStack],
  ['float-btn', FloatBtn]].forEach(([name, cls]) => customElements.define(name, cls));
</script>
</body>
</html>
